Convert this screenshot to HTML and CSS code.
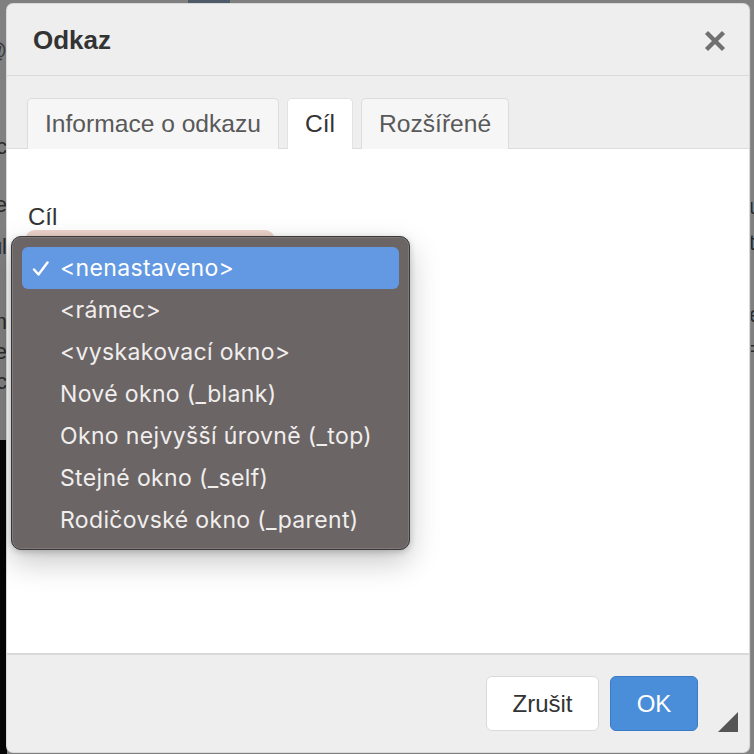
FILE: index.html
```html
<!DOCTYPE html>
<html lang="cs">
<head>
<meta charset="utf-8">
<title>Odkaz</title>
<link rel="stylesheet" href="styles.css">
</head>
<body>
<div class="backdrop">
  <div class="topbar"><span class="topblock"></span></div>
  <div class="side side-left">
    <div class="frag f-at">@</div>
    <div class="frag f1">c</div>
    <div class="frag f2">e</div>
    <div class="frag f3">ul</div>
    <div class="frag f4">n</div>
    <div class="frag f5">e</div>
    <div class="frag f6">c</div>
  </div>
  <div class="side side-right">
    <div class="frag r1">u</div>
    <div class="frag r2">t</div>
    <div class="frag r3">e</div>
    <div class="frag r4">=</div>
  </div>
</div>

<div class="dialog">
  <div class="dlg-header">
    <div class="dlg-title">Odkaz</div>
    <svg class="dlg-close" width="22" height="22" viewBox="0 0 22 22" aria-label="Zavřít">
      <path d="M2.5 2.5 L19.5 19.5 M19.5 2.5 L2.5 19.5" stroke="#707070" stroke-width="4.4" stroke-linecap="butt"/>
    </svg>
  </div>
  <div class="dlg-tabs">
    <div class="tab">Informace o odkazu</div>
    <div class="tab tab-active">Cíl</div>
    <div class="tab">Rozšířené</div>
  </div>
  <div class="dlg-content">
    <div class="field-label">Cíl</div>
    <div class="select-box"></div>
  </div>
  <div class="dlg-footer">
    <button class="btn btn-cancel">Zrušit</button>
    <button class="btn btn-ok">OK</button>
    <div class="resize"></div>
  </div>
</div>

<div class="menu">
  <div class="menu-item selected">
    <svg class="check" width="18" height="16" viewBox="0 0 18 16"><path d="M2 8.5 L6.5 13.5 L15.5 1.5" fill="none" stroke="#ffffff" stroke-width="2.4" stroke-linecap="round" stroke-linejoin="round"/></svg>
    <span>&lt;nenastaveno&gt;</span>
  </div>
  <div class="menu-item"><span>&lt;rámec&gt;</span></div>
  <div class="menu-item"><span>&lt;vyskakovací okno&gt;</span></div>
  <div class="menu-item"><span>Nové okno (_blank)</span></div>
  <div class="menu-item"><span>Okno nejvyšší úrovně (_top)</span></div>
  <div class="menu-item"><span>Stejné okno (_self)</span></div>
  <div class="menu-item"><span>Rodičovské okno (_parent)</span></div>
</div>
</body>
</html>
```

FILE: styles.css
```css
* { box-sizing: border-box; }

html, body {
  margin: 0;
  padding: 0;
}

body {
  width: 754px;
  height: 754px;
  overflow: hidden;
  position: relative;
  background:
    linear-gradient(#050505, #050505) 0 440px / 7px 314px no-repeat,
    #808080;
  font-family: "Liberation Sans", Arial, sans-serif;
}

/* ---------- backdrop fragments ---------- */
.backdrop {
  position: absolute;
  inset: 0;
}

.topbar {
  height: 4px;
  padding-left: 188px;
}

.topblock {
  display: block;
  width: 42px;
  height: 4px;
  background: #4d5b68;
}

.side {
  position: absolute;
  top: 0;
  width: 7px;
  overflow: hidden;
  display: flex;
  flex-direction: column;
  font-size: 22px;
  color: #2b2b2b;
  line-height: 1;
}

.side-left { left: 0; align-items: flex-end; }
.side-right { left: 749px; width: 5px; align-items: flex-start; }

.frag { white-space: nowrap; height: 22px; }
.f-at { margin-top: 40px; color: #3a3a3a; }
.f1 { margin-top: 74px; }
.f2 { margin-top: 36px; }
.f3 { margin-top: 20px; }
.f4 { margin-top: 53px; }
.f5 { margin-top: 8px; }
.f6 { margin-top: 8px; }

.r1 { margin-top: 196px; }
.r2 { margin-top: 14px; }
.r3 { margin-top: 50px; }
.r4 { margin-top: 12px; }

/* ---------- dialog ---------- */
.dialog {
  position: absolute;
  left: 7px;
  top: 4px;
  width: 742px;
  height: 748px;
  background: #eeeeee;
  border-radius: 6px;
  box-shadow: 0 0 0 1px #d8d8d8, 1px 0 0 1px #8c8c8c;
  display: flex;
  flex-direction: column;
  overflow: hidden;
}

.dlg-header {
  height: 72px;
  flex: none;
  display: flex;
  align-items: center;
  justify-content: space-between;
  padding: 0 23px 0 26px;
  border-bottom: 1px solid #d9d9d9;
}

.dlg-title {
  font-size: 26px;
  font-weight: bold;
  color: #333333;
  padding-top: 2px;
}

.dlg-close { display: block; margin-top: 2px; }

.dlg-tabs {
  flex: none;
  height: 73px;
  display: flex;
  align-items: flex-end;
  gap: 8px;
  padding: 0 0 0 20px;
  border-bottom: 1px solid #dddddd;
}

.tab {
  height: 51px;
  margin-bottom: -1px;
  padding: 0 17px;
  display: flex;
  align-items: center;
  font-size: 24.6px;
  color: #595959;
  background: #f6f6f6;
  border: 1px solid #dcdcdc;
  border-bottom: none;
  border-radius: 5px 5px 0 0;
}

.tab-active {
  background: #ffffff;
  color: #333333;
  border-color: #e2e2e2;
  position: relative;
  z-index: 1;
}

.dlg-content {
  flex: 1;
  background: #ffffff;
  padding: 54px 21px 0;
  border-bottom: 2px solid #d9d9d9;
}

.field-label {
  font-size: 24px;
  line-height: 28px;
  color: #333333;
}

.select-box {
  margin: -1px 0 0 -3px;
  width: 250px;
  height: 40px;
  border-radius: 10px;
  background: #ecd3cb;
}

.dlg-footer {
  flex: none;
  height: 97px;
  display: flex;
  align-items: flex-start;
  justify-content: flex-end;
  gap: 11px;
  padding: 21px 51px 0 0;
  position: relative;
}

.btn {
  height: 55px;
  border-radius: 6px;
  font-family: "Liberation Sans", Arial, sans-serif;
  font-size: 24px;
  padding: 0;
}

.btn-cancel {
  width: 113px;
  background: #ffffff;
  border: 1px solid #dadada;
  color: #333333;
}

.btn-ok {
  width: 88px;
  background: #4a8ed9;
  border: 1px solid #3a7ac6;
  color: #ffffff;
}

.resize {
  position: absolute;
  right: 11px;
  bottom: 20px;
  width: 0;
  height: 0;
  border-style: solid;
  border-width: 0 0 20px 20px;
  border-color: transparent transparent #555555 transparent;
}

/* ---------- native dropdown menu ---------- */
.menu {
  position: absolute;
  left: 11px;
  top: 236px;
  width: 399px;
  height: 314px;
  padding: 10px 10px 0 10px;
  background: #6b6565;
  border: 1px solid #3a3838;
  border-radius: 10px;
  box-shadow:
    inset 0 0 0 1px #7e7878,
    0 12px 30px rgba(0, 0, 0, 0.22),
    0 2px 6px rgba(0, 0, 0, 0.2);
  font-family: Inter, "Noto Sans", sans-serif;
  font-size: 23px;
  letter-spacing: 0.35px;
  color: #f1eeee;
}

.menu-item {
  height: 42px;
  display: flex;
  align-items: center;
  padding-left: 38px;
  position: relative;
  border-radius: 6px;
  white-space: nowrap;
}

.menu-item.selected {
  background: #6399e2;
  color: #ffffff;
}

.check {
  position: absolute;
  left: 10px;
  top: 14px;
}
```
